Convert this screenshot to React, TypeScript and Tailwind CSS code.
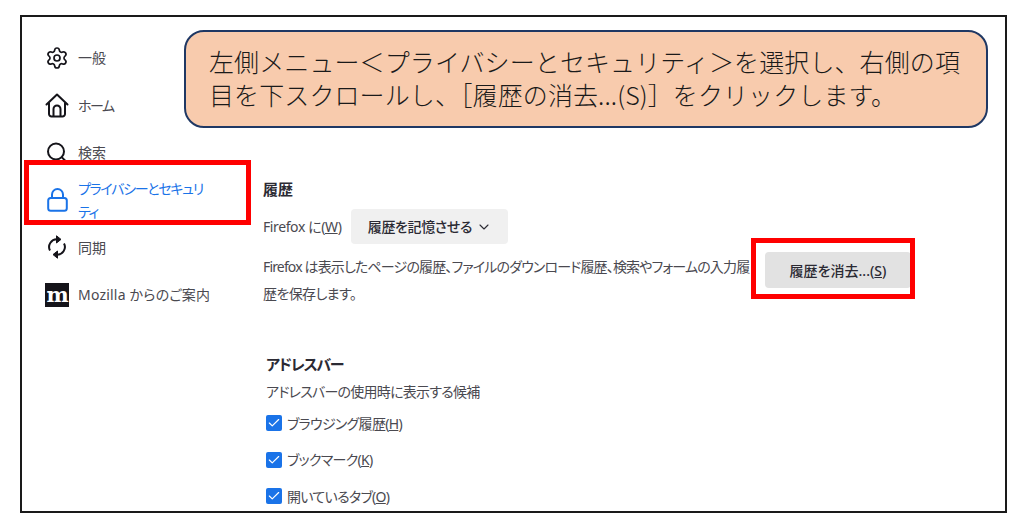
import { Check, ChevronDown, Search, Settings } from "lucide-react";

const jp = "font-['Noto_Sans','Noto_Sans_CJK_JP',sans-serif] [font-feature-settings:'palt']";

function HomeIcon() {
  return (
    <svg width="24" height="25" viewBox="0 0 24 25" fill="none" stroke="#15141a" strokeWidth="2" strokeLinejoin="round">
      <path d="M1.5 11.5 12 1.5l10.5 10" strokeLinecap="round" />
      <path d="M4 9.5V21a2.5 2.5 0 0 0 2.5 2.5h11A2.5 2.5 0 0 0 20 21V9.5" />
      <path d="M8.5 23.5V16a3.5 3.5 0 0 1 7 0v7.5" />
    </svg>
  );
}

function LockIcon() {
  return (
    <svg width="21" height="24" viewBox="0 0 21 24" fill="none" stroke="#1a73e8" strokeWidth="2">
      <rect x="1.2" y="10" width="18.6" height="12.8" rx="2.5" />
      <path d="M5 10V6.5a5.5 5.5 0 0 1 11 0V10" />
    </svg>
  );
}

function SyncIcon() {
  return (
    <svg width="20" height="24" viewBox="0 0 20 24" fill="none" stroke="#15141a" strokeWidth="2">
      <path d="M3 15.5A7.6 7.6 0 0 1 10.5 4.4" />
      <path d="M17 8.5A7.6 7.6 0 0 1 9.5 19.6" />
      <path d="M9.5 0.8 14 4.4 9.5 8Z" fill="#15141a" strokeWidth="1" />
      <path d="M10.5 16 6 19.6 10.5 23.2Z" fill="#15141a" strokeWidth="1" />
    </svg>
  );
}

function NavItem({ icon, children }: { icon: React.ReactNode; children: React.ReactNode }) {
  return (
    <div className="h-[47.5px] flex items-center gap-[9px] pl-[23px] text-[14px] text-[#4a4950]">
      <div className="w-6 flex justify-center shrink-0">{icon}</div>
      {children}
    </div>
  );
}

function CheckRow({ label, accessKey }: { label: string; accessKey: string }) {
  return (
    <div className="h-[36.5px] flex items-center gap-[5px] text-[14px] tracking-[-0.7px] text-[#4a4950]">
      <div className="w-4 h-4 rounded-[2px] bg-[#1a73e8] flex items-center justify-center">
        <Check className="w-[14px] h-[14px] text-white" strokeWidth={2} />
      </div>
      <span>
        {label}(<span className="underline">{accessKey}</span>)
      </span>
    </div>
  );
}

export default function App() {
  return (
    <div className={`relative h-[529px] w-[1024px] bg-white overflow-hidden ${jp}`}>
      <div className="absolute left-[20px] top-[15px] w-[987px] h-[498px] border-2 border-[#1a1a1a] flex overflow-hidden">
        {/* Sidebar */}
        <aside className="w-[240px] shrink-0 pt-[17px]">
          <NavItem icon={<Settings className="w-[24px] h-[24px] text-[#15141a]" strokeWidth={1.7} />}>一般</NavItem>
          <NavItem icon={<HomeIcon />}>
            <span className="tracking-[-1.5px]">ホーム</span>
          </NavItem>
          <NavItem icon={<Search className="w-[25px] h-[25px] text-[#15141a]" strokeWidth={2} />}>検索</NavItem>
          <div className="h-[47px] flex items-center gap-[9px] pl-[23px] text-[14px] leading-[23px] tracking-[-1.3px] text-[#1a73e8]">
            <div className="w-6 flex justify-center shrink-0">
              <LockIcon />
            </div>
            <div className="whitespace-nowrap">
              プライバシーとセキュリ
              <br />
              ティ
            </div>
          </div>
          <NavItem icon={<SyncIcon />}>同期</NavItem>
          <NavItem
            icon={
              <div className="w-[24px] h-[24px] bg-[#15141a] text-white flex items-center justify-center font-['DejaVu_Serif',serif] font-bold text-[21px] leading-none tracking-[-1px]">
                m
              </div>
            }
          >
            <span className="tracking-[0.2px]">Mozilla からのご案内</span>
          </NavItem>
        </aside>

        {/* Content */}
        <main className="flex-1 min-w-0 pt-[161px] pl-[1px] text-[14px] text-[#4a4950]">
          <h2 className="text-[15px] leading-[22px] font-bold text-[#2b2a33]">履歴</h2>
          <div className="mt-[9px] flex items-center h-[35px] gap-[10px]">
            <span className="tracking-[-0.4px]">
              Firefox に(<span className="underline">W</span>)
            </span>
            <div className="w-[157px] h-[35px] rounded-[4px] bg-[#f0f0f0] flex items-center justify-center gap-[4px] font-medium tracking-[-0.4px] text-[#2b2a33]">
              履歴を記憶させる
              <ChevronDown className="w-[16px] h-[16px]" strokeWidth={1.6} />
            </div>
          </div>
          <div className="mt-[8px] flex items-start">
            <div className="w-[489px] shrink-0 pt-[1px] leading-[27px] tracking-[-0.6px]">
              <div className="whitespace-nowrap tracking-[-0.85px]">
                Firefox は表示したページの履歴、ファイルのダウンロード履歴、検索やフォームの入力履
              </div>
              <div>歴を保存します。</div>
            </div>
            <div className="ml-[13px] w-[146px] h-[36px] rounded-[4px] bg-[#e2e2e2] flex items-center justify-center font-medium text-[#2b2a33]">
              <span>
                履歴を消去...(<span className="underline">S</span>)
              </span>
            </div>
          </div>
          <section className="mt-[46px] pl-[3px]">
            <h2 className="text-[15px] leading-[22px] font-bold tracking-[-1.2px] text-[#2b2a33]">アドレスバー</h2>
            <p className="mt-[6px] leading-[22px] tracking-[-0.75px]">アドレスバーの使用時に表示する候補</p>
            <div className="mt-[2px]">
              <CheckRow label="ブラウジング履歴" accessKey="H" />
              <CheckRow label="ブックマーク" accessKey="K" />
              <CheckRow label="開いているタブ" accessKey="O" />
            </div>
          </section>
        </main>
      </div>

      {/* Callout and highlight frames sit over the screenshot */}
      <div className="absolute left-[184px] top-[30px] w-[804px] h-[98px] rounded-[20px] border-[2.5px] border-[#1f3864] bg-[#f8cbad] pl-[23px] pt-[13px] text-[25px] leading-[33px] tracking-[0.1px] text-[#1a1a1a] whitespace-nowrap font-['Noto_Sans_CJK_JP',sans-serif] [font-feature-settings:normal] font-light">
        <div>左側メニュー＜プライバシーとセキュリティ＞を選択し、右側の項</div>
        <div>目を下スクロールし、［履歴の消去...(S)］をクリックします。</div>
      </div>
      <div className="absolute left-[24px] top-[160px] w-[227px] h-[65px] border-[5px] border-[#ff0000]" />
      <div className="absolute left-[751px] top-[238px] w-[164px] h-[61px] border-[5px] border-[#ff0000]" />
    </div>
  );
}
